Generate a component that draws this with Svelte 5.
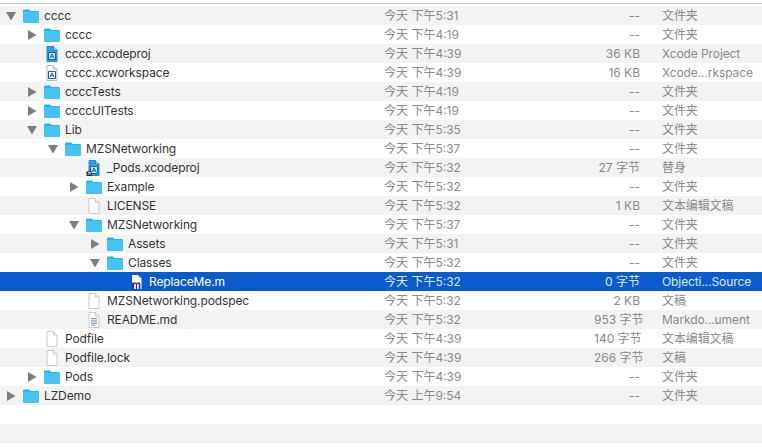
<script>
  const rows = [
    { name: 'cccc', depth: 0, open: true, icon: 'folder', date: '今天 下午5:31', size: '--', kind: '文件夹' },
    { name: 'cccc', depth: 1, open: false, icon: 'folder', date: '今天 下午4:19', size: '--', kind: '文件夹' },
    { name: 'cccc.xcodeproj', depth: 1, icon: 'proj', date: '今天 下午4:39', size: '36 KB', kind: 'Xcode Project' },
    { name: 'cccc.xcworkspace', depth: 1, icon: 'workspace', date: '今天 下午4:39', size: '16 KB', kind: 'Xcode...rkspace' },
    { name: 'ccccTests', depth: 1, open: false, icon: 'folder', date: '今天 下午4:19', size: '--', kind: '文件夹' },
    { name: 'ccccUITests', depth: 1, open: false, icon: 'folder', date: '今天 下午4:19', size: '--', kind: '文件夹' },
    { name: 'Lib', depth: 1, open: true, icon: 'folder', date: '今天 下午5:35', size: '--', kind: '文件夹' },
    { name: 'MZSNetworking', depth: 2, open: true, icon: 'folder', date: '今天 下午5:37', size: '--', kind: '文件夹' },
    { name: '_Pods.xcodeproj', depth: 3, icon: 'alias', date: '今天 下午5:32', size: '27 字节', kind: '替身' },
    { name: 'Example', depth: 3, open: false, icon: 'folder', date: '今天 下午5:32', size: '--', kind: '文件夹' },
    { name: 'LICENSE', depth: 3, icon: 'doc', date: '今天 下午5:32', size: '1 KB', kind: '文本编辑文稿' },
    { name: 'MZSNetworking', depth: 3, open: true, icon: 'folder', date: '今天 下午5:37', size: '--', kind: '文件夹' },
    { name: 'Assets', depth: 4, open: false, icon: 'folder', date: '今天 下午5:31', size: '--', kind: '文件夹' },
    { name: 'Classes', depth: 4, open: true, icon: 'folder', date: '今天 下午5:32', size: '--', kind: '文件夹' },
    { name: 'ReplaceMe.m', depth: 5, icon: 'm', date: '今天 下午5:32', size: '0 字节', kind: 'Objecti...Source', selected: true },
    { name: 'MZSNetworking.podspec', depth: 3, icon: 'doc', date: '今天 下午5:32', size: '2 KB', kind: '文稿' },
    { name: 'README.md', depth: 3, icon: 'md', date: '今天 下午5:32', size: '953 字节', kind: 'Markdo...ument' },
    { name: 'Podfile', depth: 1, icon: 'doc', date: '今天 下午4:39', size: '140 字节', kind: '文本编辑文稿' },
    { name: 'Podfile.lock', depth: 1, icon: 'doc', date: '今天 下午4:39', size: '266 字节', kind: '文稿' },
    { name: 'Pods', depth: 1, open: false, icon: 'folder', date: '今天 下午4:39', size: '--', kind: '文件夹' },
    { name: 'LZDemo', depth: 0, open: false, icon: 'folder', date: '今天 上午9:54', size: '--', kind: '文件夹' },
    {},
    {},
  ]
</script>

{#snippet page()}
  <path d="M3 .5h6.500l3.500 3.500v11.500H3z" fill="#fff" stroke="#c8c8c8" />
  <path d="M9.500 .5V4H13" fill="#f2f2f2" stroke="#c8c8c8" />
{/snippet}

{#snippet blueprint(dark)}
  <path d="M3 .5h6.500l3.500 3.500v11.500H3z" fill={dark ? '#fff' : '#2c9fe9'} stroke={dark ? '#a5b8c8' : '#1f86d4'} />
  <path d="M9.500 .5V4H13" fill={dark ? '#eef2f5' : '#bfe3f9'} stroke={dark ? '#a5b8c8' : '#1f86d4'} />
  <path d="M4.500 6.500h7v7h-7z" fill={dark ? '#fff' : '#d6eefc'} stroke={dark ? '#1c5f9e' : '#0c66b8'} />
  <path d="M5.800 12.300 8 7.800l2.200 4.500M6.600 10.800h2.800" fill="none" stroke={dark ? '#1c5f9e' : '#0c66b8'} />
{/snippet}

{#snippet icon(kind)}
  {#if kind === 'folder'}
    <svg width="16" height="14" viewBox="0 0 16 14">
      <path d="M0 2.200C0 1 .7.400 1.800.400h3.400c.8 0 1.100.3 1.600.9l.5.6h7c1.100 0 1.700.6 1.700 1.700v8.600c0 1-.6 1.600-1.700 1.600H1.700C.6 13.800 0 13.200 0 12.200z" fill="#1eb0ee" />
      <path d="M0 4.200c0-1 .6-1.500 1.700-1.500h12.600c1.100 0 1.700.5 1.700 1.500v8c0 1-.6 1.600-1.700 1.600H1.700C.6 13.800 0 13.200 0 12.200z" fill="#45c3f7" />
    </svg>
  {:else}
    <svg width="16" height="16" viewBox="0 0 16 16">
      {#if kind === 'proj'}
        {@render blueprint(false)}
      {:else if kind === 'workspace'}
        {@render blueprint(true)}
      {:else if kind === 'alias'}
        {@render blueprint(false)}
        <path d="M.5 11.500h5v4.500h-5z" fill="#222" />
        <path d="M1.700 15l2.300-2.300M2.300 12.500h1.900v1.900" fill="none" stroke="#fff" stroke-width=".9" />
      {:else if kind === 'doc'}
        {@render page()}
      {:else if kind === 'md'}
        {@render page()}
        <path d="M5 6.500h6M5 8.200h6M5 9.900h6M5 11.600h6M5 13.300h4" stroke="#7f9db8" fill="none" />
      {:else if kind === 'm'}
        <path d="M4 1h6l3.500 3.500V15H4z" fill="#fff" />
        <path d="M10 1v3.500h3.500z" fill="#d0d0d0" />
        <path d="M4 15V8.500h1.600v.7c.4-.6.9-.9 1.500-.9.7 0 1.200.3 1.500.9.5-.6 1-.9 1.700-.9 1.200 0 2.100.7 2.100 2.100V15h-1.600v-4.300c0-.7-.3-1-.8-1s-.9.3-.9 1V15H7.900v-4.300c0-.7-.3-1-.8-1-.5 0-.9.3-.9 1V15z" fill="#43279a" />
      {/if}
    </svg>
  {/if}
{/snippet}

<div class="finder">
  <div class="header"></div>
  <div class="list">
    {#each rows as row}
      <div class="row" class:selected={row.selected}>
        {#if row.name}
          <div class="name" style="padding-left: {5 + row.depth * 21}px">
            <span class="arrow">
              {#if row.open === true}
                <svg width="12" height="10" viewBox="0 0 12 10"><path d="M1 1h10L6 9.500z" fill="#7d7d7d" /></svg>
              {:else if row.open === false}
                <svg width="12" height="10" viewBox="0 0 12 10"><path d="M2 0l8.500 5L2 10z" fill="#7d7d7d" /></svg>
              {/if}
            </span>
            <span class="icon">{@render icon(row.icon)}</span>
            <span class="label">{row.name}</span>
          </div>
          <div class="date">{row.date}</div>
          <div class="size">{row.size}</div>
          <div class="kind">{row.kind}</div>
        {/if}
      </div>
    {/each}
  </div>
</div>

<style>
  :global(body) {
    margin: 0;
    background: #fff;
  }
  .finder {
    width: 762px;
    height: 447px;
    overflow: hidden;
    font-family: Inter, "Noto Sans CJK SC", sans-serif;
    font-size: 12px;
    color: #333;
  }
  .header {
    height: 3px;
    border-bottom: 1px solid #c9c9c9;
    margin-bottom: 2px;
  }
  .row {
    height: 19px;
    display: grid;
    grid-template-columns: 384px 210px 46px 100px;
    align-items: center;
    line-height: 19px;
    white-space: nowrap;
  }
  .row:nth-child(odd) {
    background: #f3f3f3;
  }
  .row.selected {
    background: #0a5bcd;
    color: #fff;
  }
  .name {
    display: flex;
    align-items: center;
  }
  .arrow {
    width: 14px;
    height: 10px;
    display: flex;
    align-items: center;
    flex-shrink: 0;
  }
  .icon {
    width: 20px;
    height: 16px;
    margin-left: 4px;
    display: flex;
    align-items: center;
    flex-shrink: 0;
  }
  .label {
    margin-left: 1px;
    letter-spacing: -0.12px;
  }
  .date,
  .size,
  .kind {
    color: #8a8a8a;
  }
  .size {
    text-align: right;
  }
  .kind {
    margin-left: 22px;
    letter-spacing: -0.1px;
  }
  .selected .date,
  .selected .size,
  .selected .kind {
    color: #dce9fb;
  }
</style>
